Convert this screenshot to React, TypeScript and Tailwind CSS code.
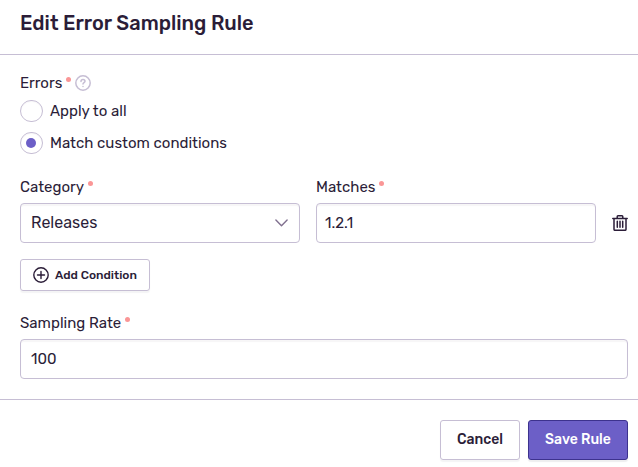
import React from 'react';

const field =
  'flex h-10 items-center rounded border border-[#c6bed4] bg-white shadow-[inset_0_2px_1px_rgba(43,34,51,0.04)]';

function Label({ text }: { text: string }) {
  return (
    <div className="flex h-5 items-center">
      <span className="whitespace-nowrap text-[15px] leading-5">{text}</span>
      <span className="mb-[7px] ml-1 size-[5px] shrink-0 rounded-full bg-[#fa9696]" />
    </div>
  );
}

function Radio({ text, checked }: { text: string; checked?: boolean }) {
  return (
    <label className="flex h-[22px] items-center gap-[7px]">
      <span className="flex h-[22px] w-[23px] items-center justify-center rounded-full border border-[#c6bed4] pr-px shadow-[inset_0_1px_1px_rgba(43,34,51,0.04)]">
        {checked && <span className="size-[10px] rounded-full bg-[#6c5fc7]" />}
      </span>
      <span className="whitespace-nowrap text-[15px] leading-5">{text}</span>
    </label>
  );
}

export default function App() {
  return (
    <div className="h-[467px] w-[638px] overflow-hidden bg-white font-[Rubik,Roboto,sans-serif] text-[#2b1d38]">
      <header className="flex h-[55px] border-b border-[#c6bed4] pl-5 pt-[10px]">
        <h1 className="whitespace-nowrap text-[20px] font-medium leading-[26px]">Edit Error Sampling Rule</h1>
      </header>

      <main className="h-[344px] pl-5 pr-[10px] pt-[18px]">
        <div className="flex items-center gap-1">
          <Label text="Errors" />
          <svg width="16" height="16" viewBox="0 0 16 16" fill="none" stroke="#c6bed4" strokeWidth="1.5" strokeLinecap="round">
            <circle cx="8" cy="8" r="7.2" />
            <path d="M6 6.4c0-1.2.9-1.9 2-1.9s2 .7 2 1.8c0 1.3-2 1.5-2 2.8M8 11.5v.1" />
          </svg>
        </div>
        <div className="mt-[7px] flex flex-col gap-[10px]">
          <Radio text="Apply to all" />
          <Radio text="Match custom conditions" checked />
        </div>

        <div className="mt-[23px] grid grid-cols-[280px_280px_16px] gap-x-4">
          <div>
            <Label text="Category" />
            <div className={field + ' mt-[6px] justify-between pl-[10px] pr-[11px]'}>
              <span className="text-[16px] leading-5">Releases</span>
              <svg width="13" height="8" viewBox="0 0 13 8" fill="none" stroke="#80708f" strokeWidth="1.4" strokeLinecap="round" strokeLinejoin="round">
                <path d="M.9 1l5.6 5.7L12.1 1" />
              </svg>
            </div>
          </div>
          <div>
            <Label text="Matches" />
            <div className={field + ' mt-[6px] pl-2'}>
              <span className="text-[15px] leading-5">1.2.1</span>
            </div>
          </div>
          <div className="flex h-10 items-center self-end">
            <svg width="16" height="16" viewBox="0 0 16 16" fill="none" stroke="#2b1d38" strokeWidth="1.5" strokeLinecap="round" strokeLinejoin="round">
              <path d="M.8 3.4h14.4M2 3.4v10.9c0 .6.4 1 1 1h10c.6 0 1-.4 1-1V3.4M5.2 3.2V1.7c0-.5.3-.9.8-.9h4c.5 0 .8.4.8.9v1.5" />
              <path d="M5.3 6.2v6.1M8 6.2v6.1M10.7 6.2v6.1" />
            </svg>
          </div>
        </div>

        <button className="mt-4 flex h-8 w-[130px] items-center rounded-[3px] border border-[#c6bed4] pl-3 shadow-[0_2px_1px_rgba(43,34,51,0.05)]">
          <svg width="16" height="16" viewBox="0 0 16 16" fill="none" stroke="#2b1d38" strokeWidth="1.4" strokeLinecap="round">
            <circle cx="8" cy="8" r="7.2" />
            <path d="M8 4.5v7M4.5 8h7" />
          </svg>
          <span className="ml-[6px] whitespace-nowrap text-[12px] font-medium leading-4">Add Condition</span>
        </button>

        <div className="mt-[22px]">
          <Label text="Sampling Rate" />
          <div className={field + ' mt-[6px] pl-[10px]'}>
            <span className="text-[15px] leading-5">100</span>
          </div>
        </div>
      </main>

      <footer className="flex justify-end gap-2 border-t border-[#c6bed4] pr-[10px] pt-5">
        <button className="h-10 w-20 whitespace-nowrap rounded-[3px] border border-[#c6bed4] text-[14px] font-medium leading-5 shadow-[0_2px_1px_rgba(43,34,51,0.05)]">Cancel</button>
        <button className="h-10 w-[100px] whitespace-nowrap rounded-[3px] border border-[#3d328e] bg-[#6c5fc7] text-[14px] font-medium leading-5 text-white shadow-[0_2px_1px_rgba(43,34,51,0.08)]">Save Rule</button>
      </footer>
    </div>
  );
}
